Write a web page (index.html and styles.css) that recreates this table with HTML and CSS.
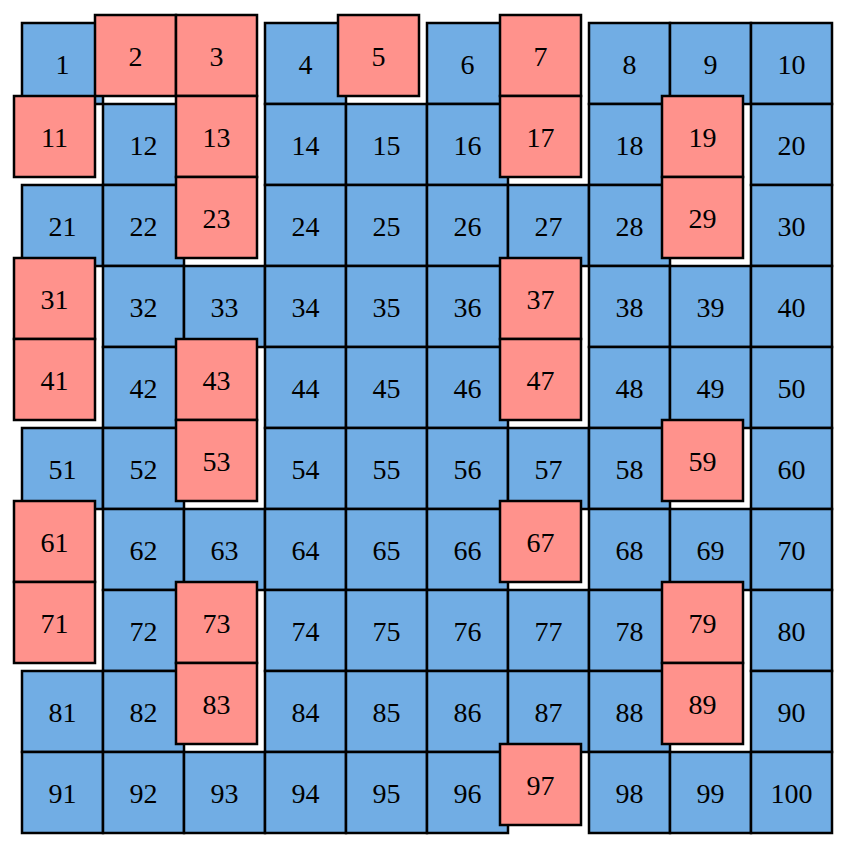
FILE: index.html
```html
<!DOCTYPE html>
<html>
<head>
<meta charset="utf-8">
<link rel="stylesheet" href="styles.css">
</head>
<body>
<div class="board">
<div class="cell">1</div><div class="cell prime">2</div><div class="cell prime">3</div><div class="cell">4</div><div class="cell prime">5</div><div class="cell">6</div><div class="cell prime">7</div><div class="cell">8</div><div class="cell">9</div><div class="cell">10</div>
<div class="cell prime">11</div><div class="cell">12</div><div class="cell prime">13</div><div class="cell">14</div><div class="cell">15</div><div class="cell">16</div><div class="cell prime">17</div><div class="cell">18</div><div class="cell prime">19</div><div class="cell">20</div>
<div class="cell">21</div><div class="cell">22</div><div class="cell prime">23</div><div class="cell">24</div><div class="cell">25</div><div class="cell">26</div><div class="cell">27</div><div class="cell">28</div><div class="cell prime">29</div><div class="cell">30</div>
<div class="cell prime">31</div><div class="cell">32</div><div class="cell">33</div><div class="cell">34</div><div class="cell">35</div><div class="cell">36</div><div class="cell prime">37</div><div class="cell">38</div><div class="cell">39</div><div class="cell">40</div>
<div class="cell prime">41</div><div class="cell">42</div><div class="cell prime">43</div><div class="cell">44</div><div class="cell">45</div><div class="cell">46</div><div class="cell prime">47</div><div class="cell">48</div><div class="cell">49</div><div class="cell">50</div>
<div class="cell">51</div><div class="cell">52</div><div class="cell prime">53</div><div class="cell">54</div><div class="cell">55</div><div class="cell">56</div><div class="cell">57</div><div class="cell">58</div><div class="cell prime">59</div><div class="cell">60</div>
<div class="cell prime">61</div><div class="cell">62</div><div class="cell">63</div><div class="cell">64</div><div class="cell">65</div><div class="cell">66</div><div class="cell prime">67</div><div class="cell">68</div><div class="cell">69</div><div class="cell">70</div>
<div class="cell prime">71</div><div class="cell">72</div><div class="cell prime">73</div><div class="cell">74</div><div class="cell">75</div><div class="cell">76</div><div class="cell">77</div><div class="cell">78</div><div class="cell prime">79</div><div class="cell">80</div>
<div class="cell">81</div><div class="cell">82</div><div class="cell prime">83</div><div class="cell">84</div><div class="cell">85</div><div class="cell">86</div><div class="cell">87</div><div class="cell">88</div><div class="cell prime">89</div><div class="cell">90</div>
<div class="cell">91</div><div class="cell">92</div><div class="cell">93</div><div class="cell">94</div><div class="cell">95</div><div class="cell">96</div><div class="cell prime">97</div><div class="cell">98</div><div class="cell">99</div><div class="cell">100</div>
</div>
</body>
</html>
```
FILE: styles.css
```css
html, body {
  margin: 0;
  padding: 0;
  background: #ffffff;
}
body {
  width: 852px;
  height: 858px;
  overflow: hidden;
}
.board {
  display: grid;
  grid-template-columns: repeat(10, 81px);
  grid-auto-rows: 81px;
  padding: 23px 0 0 22px;
}
.cell {
  background: #71ade4;
  box-shadow: 0 0 0 1.25px #000, inset 0 0 0 1.25px #000;
  display: flex;
  align-items: center;
  justify-content: center;
  padding-top: 3px;
  box-sizing: border-box;
  font-family: "Liberation Serif", "Times New Roman", serif;
  font-size: 28px;
  color: #000;
}
.cell.prime {
  background: #ff928c;
  transform: translate(-8px, -8px);
}
```
